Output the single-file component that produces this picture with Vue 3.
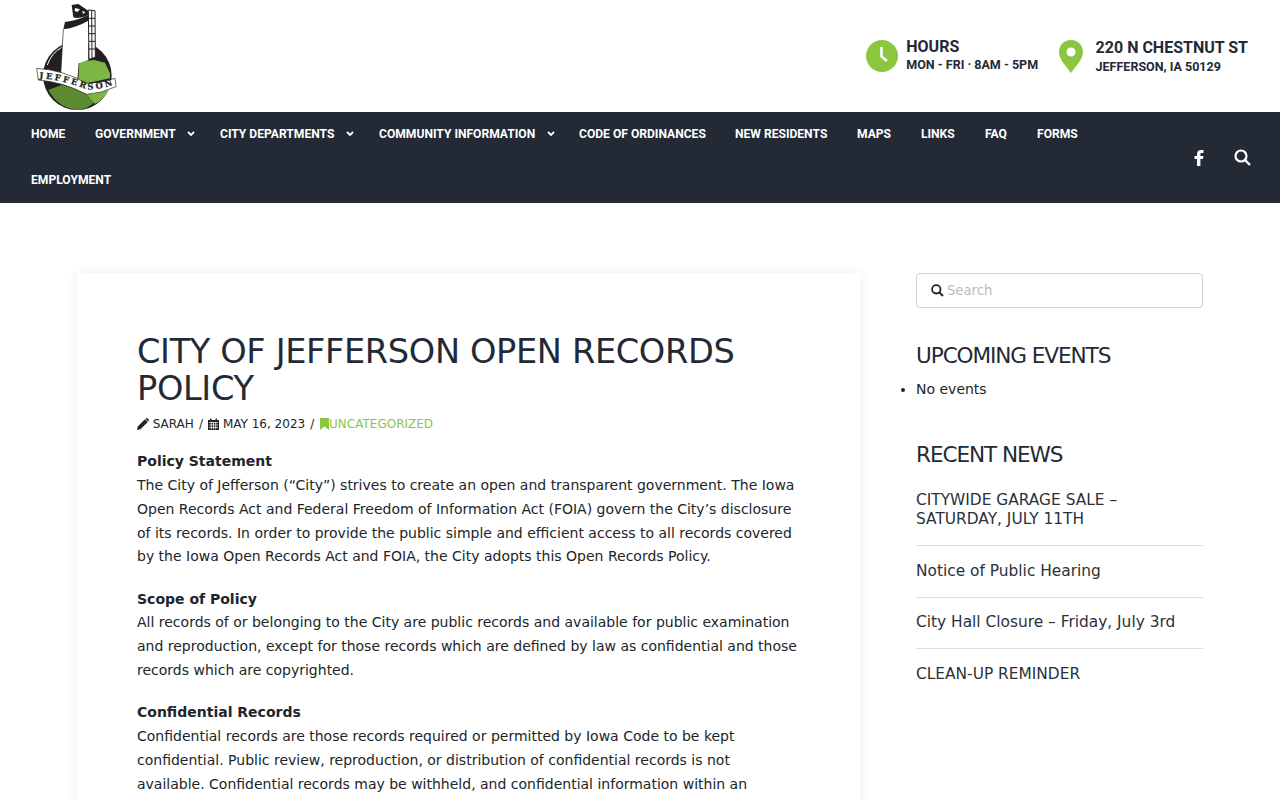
<script setup>
const navItems = [
  { label: 'Home', width: 64 },
  { label: 'Government', caret: true, width: 125 },
  { label: 'City Departments', caret: true, width: 159 },
  { label: 'Community Information', caret: true, width: 200 },
  { label: 'Code of Ordinances', width: 156 },
  { label: 'New Residents', width: 122 },
  { label: 'Maps', width: 64 },
  { label: 'Links', width: 64 },
  { label: 'FAQ', width: 52 },
  { label: 'Forms', width: 72 },
  { label: 'Employment', width: 112 }
]
const news = [
  'CITYWIDE GARAGE SALE – SATURDAY, JULY 11TH',
  'Notice of Public Hearing',
  'City Hall Closure – Friday, July 3rd',
  'CLEAN-UP REMINDER'
]
</script>

<template>
  <div class="page">
    <header class="top">
      <svg class="logo" width="120" height="112" viewBox="0 0 360 336">
        <!-- round badge -->
        <circle cx="172" cy="227" r="103" fill="#231f20" />
        <path d="M82 195 A96 96 0 0 1 125 142" fill="none" stroke="#fff" stroke-width="3" />
        <path d="M85 270 L130 253 L195 275 L225 305 Q200 330 172 330 Q115 325 85 270Z" fill="#5c8a2f" />
        <path d="M195 275 L272 255 Q260 295 225 312Z" fill="#7db642" />
        <path d="M175 240 L178 185 L222 180 L255 188 L270 220 L270 235 L200 250Z" fill="#7db642" />
        <!-- building -->
        <path d="M130 88 Q170 82 205 60 L205 180 L176 190 L172 240 L122 225Z" fill="#fff" />
        <path d="M130 88 L122 225" fill="none" stroke="#231f20" stroke-width="2" />
        <path d="M135 66 Q170 62 205 45 L205 62 Q170 82 130 88Z" fill="#231f20" />
        <path d="M155 15 L175 12 L205 32 L205 45 Q180 58 160 52Z" fill="#231f20" />
        <path d="M165 24 L180 28 L172 36 L164 33Z M186 33 L196 36 L190 42Z" fill="#fff" />
        <path d="M205 30 L225 32 L226 172 L207 178Z" fill="#fff" stroke="#231f20" stroke-width="3" />
        <path d="M215 32 L216 176 M205 55 L225 55 M205 78 L225 78 M206 101 L226 101 M206 124 L226 124 M206 147 L226 147" fill="none" stroke="#231f20" stroke-width="3" />
        <!-- banner -->
        <path d="M50 205 Q130 210 200 250 Q245 250 285 235 L288 260 Q245 280 200 283 Q130 246 55 240Z" fill="#fff" stroke="#231f20" stroke-width="2" />
        <path id="ribbon-line" d="M58 235 Q130 240 200 268 Q245 268 282 254" fill="none" />
        <text class="logo-text"><textPath href="#ribbon-line" textLength="226">JEFFERSON</textPath></text>
      </svg>
      <div class="contacts">
        <div class="contact">
          <svg width="32" height="32" viewBox="0 0 32 32">
            <circle cx="16" cy="16" r="16" fill="#8cc63f" />
            <path d="M15.500 7 V16.500 L21 21" fill="none" stroke="#fff" stroke-width="2.600" />
          </svg>
          <div class="contact-text hours">
            <div class="big">HOURS</div>
            <div class="small tight">MON - FRI · 8AM - 5PM</div>
          </div>
        </div>
        <div class="contact">
          <svg width="24" height="33" viewBox="0 0 24 33">
            <path d="M12 0 C5 0 0 5.500 0 12 C0 20 8 27 12 33 C16 27 24 20 24 12 C24 5.500 19 0 12 0Z" fill="#8cc63f" />
            <circle cx="12" cy="12" r="4.500" fill="#fff" />
          </svg>
          <div class="contact-text address">
            <div class="big">220 N CHESTNUT ST</div>
            <div class="small">JEFFERSON, IA 50129</div>
          </div>
        </div>
      </div>
    </header>

    <nav class="nav">
      <ul class="menu">
        <li v-for="item in navItems" :key="item.label" :style="{ width: item.width + 'px' }">
          <span>{{ item.label }}</span>
          <svg v-if="item.caret" class="caret" width="8" height="6" viewBox="0 0 8 6">
            <path d="M1 1 L4 4 L7 1" fill="none" stroke="#fff" stroke-width="1.800" />
          </svg>
        </li>
      </ul>
      <div class="nav-icons">
        <svg width="10" height="16" viewBox="0 0 10 16">
          <path d="M3 16 V9 H0.500 V6 H3 V4 C3 1.500 4.500 0 7 0 H9.500 V3 H7.800 C6.700 3 6.400 3.500 6.400 4.300 V6 H9.400 L9 9 H6.400 V16Z" fill="#fff" />
        </svg>
        <svg width="17" height="17" viewBox="0 0 17 17">
          <circle cx="7" cy="7" r="5.500" fill="none" stroke="#fff" stroke-width="2.200" />
          <path d="M11 11 L16 16" stroke="#fff" stroke-width="2.400" />
        </svg>
      </div>
    </nav>

    <div class="content">
      <main class="card">
        <h1>CITY OF JEFFERSON OPEN RECORDS POLICY</h1>
        <div class="meta">
          <svg width="12" height="12" viewBox="0 0 12 12"><path d="M0 12 L0.700 8.500 L8 1.200 L10.800 4 L3.500 11.300Z M9 0.300 Q9.700 -0.200 10.400 0.300 L11.700 1.600 Q12.200 2.300 11.700 3 L11.200 3.500 L8.500 0.800Z" fill="#212529" /></svg>
          <span class="m-text">SARAH</span><span class="sep">/</span>
          <svg width="11" height="12" viewBox="0 0 11 12"><path d="M0 2 H2 V0.500 H3.500 V2 H7.500 V0.500 H9 V2 H11 V12 H0Z" fill="#212529" /><path d="M1 4.500 H10 M1 7 H10 M1 9.500 H10 M3.300 4 V11.500 M5.500 4 V11.500 M7.700 4 V11.500" stroke="#fff" stroke-width="0.700" /></svg>
          <span class="m-text">MAY 16, 2023</span><span class="sep">/</span>
          <svg class="mark" width="9" height="12" viewBox="0 0 9 12"><path d="M0 0 H9 V12 L4.500 8.500 L0 12Z" fill="#8cc63f" /></svg>
          <span class="cat">UNCATEGORIZED</span>
        </div>
        <p>
          <strong>Policy Statement</strong><br />
          The City of Jefferson (“City”) strives to create an open and transparent government. The Iowa Open Records Act and Federal Freedom of Information Act (FOIA) govern the City’s disclosure of its records. In order to provide the public simple and efficient access to all records covered by the Iowa Open Records Act and FOIA, the City adopts this Open Records Policy.
        </p>
        <p>
          <strong>Scope of Policy</strong><br />
          All records of or belonging to the City are public records and available for public examination and reproduction, except for those records which are defined by law as confidential and those records which are copyrighted.
        </p>
        <p>
          <strong>Confidential Records</strong><br />
          Confidential records are those records required or permitted by Iowa Code to be kept confidential. Public review, reproduction, or distribution of confidential records is not available. Confidential records may be withheld, and confidential information within an
        </p>
      </main>

      <aside class="side">
        <div class="search">
          <svg width="13" height="13" viewBox="0 0 13 13">
            <circle cx="5.300" cy="5.300" r="4.200" fill="none" stroke="#212529" stroke-width="1.800" />
            <path d="M8.500 8.500 L12 12" stroke="#212529" stroke-width="2" />
          </svg>
          <span>Search</span>
        </div>
        <h2 class="first">UPCOMING EVENTS</h2>
        <ul class="events"><li>No events</li></ul>
        <h2 class="news-head">RECENT NEWS</h2>
        <div class="news">
          <div v-for="n in news" :key="n" class="news-item">{{ n }}</div>
        </div>
      </aside>
    </div>
  </div>
</template>

<style scoped>
.page {
  height: 800px;
  overflow: hidden;
  font-family: "DejaVu Sans", sans-serif;
  color: #212529;
  background: #fff;
}
.top {
  height: 112px;
  display: flex;
  align-items: center;
  justify-content: space-between;
  padding: 0 32px 0 20px;
}
.logo-text {
  font-family: "DejaVu Serif", serif;
  font-weight: 700;
  font-size: 25px;
  fill: #231f20;
  stroke: #231f20;
  stroke-width: 0.700px;
}
.contacts {
  display: flex;
  gap: 21px;
}
.contact {
  display: flex;
  align-items: center;
  gap: 8px;
  font-family: Roboto, sans-serif;
  font-weight: 700;
  color: #232a35;
}
.contact + .contact {
  gap: 12.500px;
}
.hours {
  padding-bottom: 2px;
}
.address {
  padding-top: 2px;
}
.big {
  font-size: 16px;
  line-height: 19px;
}
.small {
  font-size: 12.500px;
  line-height: 19px;
}
.tight {
  line-height: 17px;
}
.nav {
  height: 91px;
  background: #232a35;
  display: flex;
  align-items: center;
  justify-content: space-between;
  padding: 0 29px 0 31px;
}
.menu {
  display: flex;
  flex-wrap: wrap;
  align-self: flex-start;
  width: 1100px;
  margin: -1px 0 0;
  padding: 0;
  list-style: none;
}
.menu li {
  height: 46px;
  display: flex;
  align-items: center;
  font-family: Roboto, sans-serif;
  font-size: 12.100px;
  font-weight: 700;
  text-transform: uppercase;
  color: #fff;
  white-space: nowrap;
}
.caret {
  margin-left: 11.500px;
}
.nav-icons {
  display: flex;
  align-items: center;
  gap: 30px;
}
.content {
  display: flex;
  align-items: flex-start;
  gap: 56px;
  padding: 70px 0 0 77px;
}
.card {
  width: 783px;
  box-sizing: border-box;
  flex: none;
  padding: 60px;
  box-shadow: 0 0 12px rgba(0, 0, 0, 0.07);
  font-size: 14px;
  line-height: 23.800px;
}
h1 {
  margin: 0 0 6px;
  font-size: 33.600px;
  font-weight: 400;
  line-height: 37px;
  letter-spacing: -0.350px;
  color: #232a35;
}
.meta {
  display: flex;
  align-items: center;
  height: 24px;
  margin-bottom: 13.200px;
  font-size: 12px;
}
.meta svg {
  margin-bottom: 2px;
}
.m-text {
  margin-left: 3.700px;
}
.sep {
  margin: 0 5.200px;
}
.cat {
  color: #8cc63f;
}
.mark {
  margin-right: 0.500px;
}
p {
  margin: 0 0 18.400px;
}
strong {
  font-weight: 700;
}
.side {
  width: 287px;
  flex: none;
  font-size: 14px;
}
.search {
  height: 35px;
  box-sizing: border-box;
  border: 1px solid #ced4da;
  border-radius: 4px;
  display: flex;
  align-items: center;
  gap: 3px;
  padding: 0 0 1px 14px;
  font-size: 13.200px;
  color: #bbb;
}
h2 {
  margin: 0;
  font-size: 21.600px;
  font-weight: 400;
  line-height: 26px;
  letter-spacing: -1.100px;
  color: #232a35;
}
.first {
  margin-top: 35px;
}
.events {
  margin: 8px 0 0;
  padding: 0;
  line-height: 24px;
}
.news-head {
  margin-top: 41px;
}
.news {
  margin-top: 7.600px;
}
.news-item {
  font-size: 15.400px;
  line-height: 19px;
  padding: 15.900px 0 15.600px;
  border-bottom: 1px solid #ddd;
  color: #2b313a;
}
.news-item:last-child {
  border-bottom: none;
}
</style>

<style>
html, body {
  margin: 0;
  background: #fff;
}
</style>
